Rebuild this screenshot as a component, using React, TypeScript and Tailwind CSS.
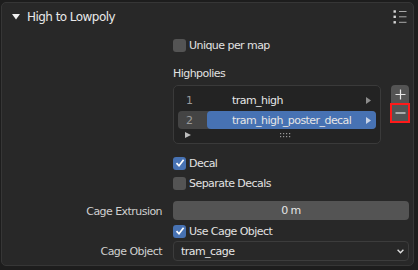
import React from "react";

const font = { fontFamily: '"DejaVu Sans", "Liberation Sans", sans-serif' };

function Checkbox({ checked, label }: { checked?: boolean; label: string }) {
  return (
    <div className="flex h-[20px] items-center">
      <div
        className={`flex h-[13px] w-[13px] items-center justify-center rounded-[3px] ${
          checked ? "bg-[#4772b3]" : "bg-[#545454]"
        }`}
      >
        {checked && (
          <svg width="10" height="10" viewBox="0 0 10 10">
            <path d="M1.5 5.2 L4 7.8 L8.6 1.8" stroke="#ffffff" strokeWidth="1.7" fill="none" />
          </svg>
        )}
      </div>
      <span className="ml-[3px] text-[#e2e2e2]">{label}</span>
    </div>
  );
}

function Tri({ color = "#8c8c8c" }: { color?: string }) {
  return (
    <svg width="5" height="7" viewBox="0 0 5 7">
      <path d="M0 0 L5 3.5 L0 7 Z" fill={color} />
    </svg>
  );
}

function ListRow({ index, name, active }: { index: number; name: string; active?: boolean }) {
  return (
    <div className={`flex h-[18px] items-center rounded-[4px] ${active ? "bg-[#444444]" : ""}`}>
      <span className="w-[29px] pl-[8px] text-[#9a9a9a]">{index}</span>
      <div
        className={`flex h-full flex-1 items-center rounded-[4px] pl-[25px] pr-[5px] ${
          active ? "bg-[#4772b3]" : ""
        }`}
      >
        <span className="flex-1 text-[#e6e6e6]">{name}</span>
        <Tri color={active ? "#c9d4e8" : "#8c8c8c"} />
      </div>
    </div>
  );
}

function Labeled({ label, children }: { label: string; children: React.ReactNode }) {
  return (
    <div className="flex h-[20px] items-center">
      <span className="w-[161px] pr-px text-right text-[#d0d0d0]">{label}</span>
      <div className="ml-[10px] h-full w-[236px]">{children}</div>
    </div>
  );
}

export default function App() {
  return (
    <div
      className="h-[270px] w-[418px] bg-[#1d1d1d] pb-[4px] pl-px pr-[4px] pt-[2px] text-[11px] leading-none tracking-[-0.55px]"
      style={font}
    >
      <div className="flex h-[264px] w-[413px] flex-col rounded-[5px] border border-[#363636] bg-[#282828]">
        {/* header */}
        <div className="flex h-[28px] items-center pl-[10px] pr-[6px]">
          <svg width="8" height="6" viewBox="0 0 8 6">
            <path d="M0 0 L8 0 L4 5.5 Z" fill="#f0f0f0" />
          </svg>
          <span className="ml-[7px] flex-1 text-[12px] text-[#e8e8e8]">High to Lowpoly</span>
          <svg width="14" height="14" viewBox="0 0 14 14">
            {[1.5, 6.8, 12.3].map((y) => (
              <g key={y}>
                <rect x="0.5" y={y - 1.2} width="2.4" height="2.4" fill="#d6d6d6" />
                <rect x="6" y={y - 0.5} width="7.5" height="1" fill="#a8a8a8" />
              </g>
            ))}
          </svg>
        </div>

        <div className="mt-[4px] pl-[171px]">
          <Checkbox label="Unique per map" />
        </div>

        <div className="mt-[8px] flex h-[20px] items-center pl-[171px] text-[#e2e2e2]">Highpolies</div>

        {/* list */}
        <div className="mt-[2px] flex pl-[171px]">
          <div className="flex h-[59px] w-[208px] flex-col rounded-[5px] border border-[#3a3a3a] bg-[#232323] px-[4px] pt-[5px]">
            <ListRow index={1} name="tram_high" />
            <div className="mt-[2px]">
              <ListRow index={2} name="tram_high_poster_decal" active />
            </div>
            <div className="flex h-[12px] items-center pl-[7px]">
              <svg width="6" height="6" viewBox="0 0 6 6">
                <path d="M0 0 L6 3 L0 6 Z" fill="#bdbdbd" />
              </svg>
              <div className="flex flex-1 justify-center pl-[4px]">
                <svg width="11" height="5" viewBox="0 0 11 5">
                  {[0, 3, 6, 9].map((x) => (
                    <g key={x}>
                      <rect x={x} y="0" width="1.2" height="1.2" fill="#9a9a9a" />
                      <rect x={x} y="3" width="1.2" height="1.2" fill="#9a9a9a" />
                    </g>
                  ))}
                </svg>
              </div>
            </div>
          </div>
          <div className="ml-[9px] flex w-[20px] flex-col">
            <div className="mx-px flex h-[18px] items-center justify-center rounded-t-[4px] bg-[#545454]">
              <svg width="11" height="11" viewBox="0 0 11 11">
                <path d="M5.5 0.5 V10.5 M0.5 5.5 H10.5" stroke="#e6e6e6" strokeWidth="1.2" />
              </svg>
            </div>
            <div className="flex h-[20px] items-center justify-center border-2 border-[#ff1a1a] bg-[#545454]">
              <svg width="11" height="2" viewBox="0 0 11 2">
                <path d="M0.5 1 H10.5" stroke="#e6e6e6" strokeWidth="1.2" />
              </svg>
            </div>
          </div>
        </div>

        <div className="mt-[9px] pl-[171px]">
          <Checkbox checked label="Decal" />
          <Checkbox label="Separate Decals" />
        </div>

        <div className="mt-[8px]">
          <Labeled label="Cage Extrusion">
            <div className="flex h-[19px] items-center justify-center rounded-[4px] bg-[#545454] text-[#e6e6e6]">
              0 m
            </div>
          </Labeled>
        </div>
        <div className="pl-[171px]">
          <Checkbox checked label="Use Cage Object" />
        </div>
        <Labeled label="Cage Object">
          <div className="flex h-[20px] items-center rounded-[4px] border border-[#3c3c3c] bg-[#282828] pl-[7px] pr-[4px] text-[#e6e6e6]">
            <span className="flex-1">tram_cage</span>
            <svg width="7" height="5" viewBox="0 0 7 5">
              <path d="M0.6 0.8 L3.5 3.8 L6.4 0.8" stroke="#e0e0e0" strokeWidth="1.3" fill="none" />
            </svg>
          </div>
        </Labeled>
      </div>
    </div>
  );
}
